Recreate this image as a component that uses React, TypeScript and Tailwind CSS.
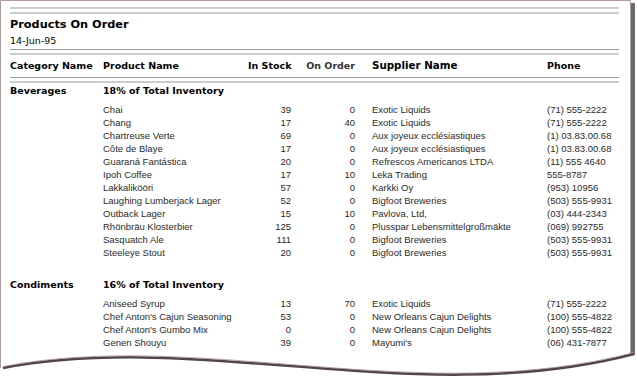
import React from 'react';

type Row = { product: string; stock: number; order: number; supplier: string; phone: string };

const beverages: Row[] = [
  { product: 'Chai', stock: 39, order: 0, supplier: 'Exotic Liquids', phone: '(71) 555-2222' },
  { product: 'Chang', stock: 17, order: 40, supplier: 'Exotic Liquids', phone: '(71) 555-2222' },
  { product: 'Chartreuse Verte', stock: 69, order: 0, supplier: 'Aux joyeux ecclésiastiques', phone: '(1) 03.83.00.68' },
  { product: 'Côte de Blaye', stock: 17, order: 0, supplier: 'Aux joyeux ecclésiastiques', phone: '(1) 03.83.00.68' },
  { product: 'Guaraná Fantástica', stock: 20, order: 0, supplier: 'Refrescos Americanos LTDA', phone: '(11) 555 4640' },
  { product: 'Ipoh Coffee', stock: 17, order: 10, supplier: 'Leka Trading', phone: '555-8787' },
  { product: 'Lakkalikööri', stock: 57, order: 0, supplier: 'Karkki Oy', phone: '(953) 10956' },
  { product: 'Laughing Lumberjack Lager', stock: 52, order: 0, supplier: 'Bigfoot Breweries', phone: '(503) 555-9931' },
  { product: 'Outback Lager', stock: 15, order: 10, supplier: 'Pavlova, Ltd,', phone: '(03) 444-2343' },
  { product: 'Rhönbräu Klosterbier', stock: 125, order: 0, supplier: 'Plusspar Lebensmittelgroßmäkte', phone: '(069) 992755' },
  { product: 'Sasquatch Ale', stock: 111, order: 0, supplier: 'Bigfoot Breweries', phone: '(503) 555-9931' },
  { product: 'Steeleye Stout', stock: 20, order: 0, supplier: 'Bigfoot Breweries', phone: '(503) 555-9931' },
];

const condiments: Row[] = [
  { product: 'Aniseed Syrup', stock: 13, order: 70, supplier: 'Exotic Liquids', phone: '(71) 555-2222' },
  { product: "Chef Anton's Cajun Seasoning", stock: 53, order: 0, supplier: 'New Orleans Cajun Delights', phone: '(100) 555-4822' },
  { product: "Chef Anton's Gumbo Mix", stock: 0, order: 0, supplier: 'New Orleans Cajun Delights', phone: '(100) 555-4822' },
  { product: 'Genen Shouyu', stock: 39, order: 0, supplier: "Mayumi's", phone: '(06) 431-7877' },
];

const cols = 'grid grid-cols-[93px_145px_43px_64px_192px_72px] whitespace-nowrap';

function Group({ name, pct, rows }: { name: string; pct: string; rows: Row[] }) {
  return (
    <div>
      <div className={`${cols} h-[16px] items-center font-['DejaVu_Sans'] font-bold text-[9.5px] text-black`}>
        <div>{name}</div>
        <div className="col-span-5">{pct} of Total Inventory</div>
      </div>
      <div className="mt-[4px] font-['Liberation_Sans'] text-[9.5px] text-[#2a2a2a]">
        {rows.map((r) => (
          <div key={r.product} className={`${cols} h-[13px] items-center`}>
            <div />
            <div>{r.product}</div>
            <div className="text-right">{r.stock}</div>
            <div className="text-right">{r.order}</div>
            <div className="pl-[17px]">{r.supplier}</div>
            <div>{r.phone}</div>
          </div>
        ))}
      </div>
    </div>
  );
}

export default function App() {
  return (
    <div className="relative w-[637px] h-[384px] bg-white overflow-hidden">
      {/* page frame */}
      <svg className="absolute inset-0 pointer-events-none" width="637" height="384" viewBox="0 0 637 384">
        <rect x="631" y="3" width="4" height="352" fill="#6a6a6a" />
        <path d="M0.5,368 L0.5,0.5 L630.5,0.5 L630.5,354" fill="none" stroke="#b39b9b" strokeWidth="1" />
        <path d="M3,368 C200,330 420,410 634,354" fill="none" stroke="#524545" strokeWidth="2.5" />
        <path d="M3,366.5 C200,328.5 420,408.5 634,352.5" fill="none" stroke="#a89090" strokeWidth="0.8" />
      </svg>

      <div className="relative w-[609px] ml-[10px]">
        <div className="pt-[7px]">
          <div className="h-[2px] bg-[#cccccc]" />
          <div className="h-[2px] bg-[#cccccc] mt-[3px]" />
        </div>
        <div className="mt-[3px] h-[16px] flex items-center font-['DejaVu_Sans'] font-bold text-[11.3px] text-black">
          Products On Order
        </div>
        <div className="mt-[2px] h-[12px] flex items-center font-['DejaVu_Sans'] text-[9.5px] text-black">
          14-Jun-95
        </div>
        <div className="mt-[2px] h-[1px] bg-[#999999]" />
        <div className="h-[2px] bg-[#cccccc] mt-[3px]" />
        <div className={`${cols} mt-[3px] h-[16px] items-center font-['DejaVu_Sans'] font-bold text-[9.5px] text-black`}>
          <div>Category Name</div>
          <div>Product Name</div>
          <div>In Stock</div>
          <div className="text-right text-[#333333]">On Order</div>
          <div className="pl-[17px] text-[10.3px]">Supplier Name</div>
          <div>Phone</div>
        </div>
        <div className="mt-[3px] h-[1px] bg-[#999999]" />
        <div className="h-[2px] bg-[#cccccc] mt-[3px]" />
        <Group name="Beverages" pct="18%" rows={beverages} />
        <div className="mt-[18px]">
          <Group name="Condiments" pct="16%" rows={condiments} />
        </div>
      </div>
    </div>
  );
}
